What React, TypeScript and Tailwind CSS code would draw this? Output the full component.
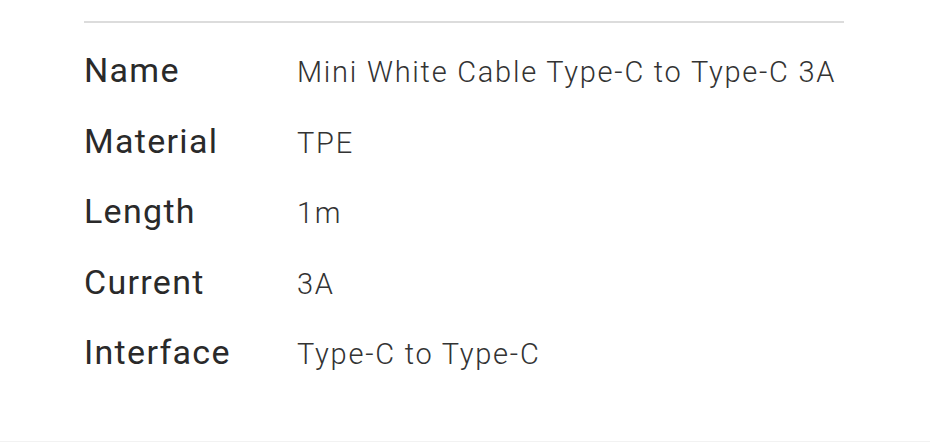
const specs = [
  { label: "Name", value: "Mini White Cable Type-C to Type-C 3A" },
  { label: "Material", value: "TPE" },
  { label: "Length", value: "1m" },
  { label: "Current", value: "3A" },
  { label: "Interface", value: "Type-C to Type-C" },
];

export default function App() {
  return (
    <div className="w-[930px] h-[442px] bg-white border-b border-[#f2f2f2] font-['Roboto',sans-serif]">
      <div className="ml-[84px] w-[760px] pt-[21px]">
        <div className="border-t-2 border-[#dcdcdc]" />
        <div className="pt-[12px] flex flex-col">
          {specs.map((s) => (
            <div key={s.label} className="flex items-baseline h-[70.5px] leading-[70px]">
              <span className="w-[213px] shrink-0 text-[34px] tracking-[1.3px] text-[#2a2a2a]">{s.label}</span>
              <span className="text-[29px] font-light tracking-[1.75px] text-[#333]">{s.value}</span>
            </div>
          ))}
        </div>
      </div>
    </div>
  );
}
